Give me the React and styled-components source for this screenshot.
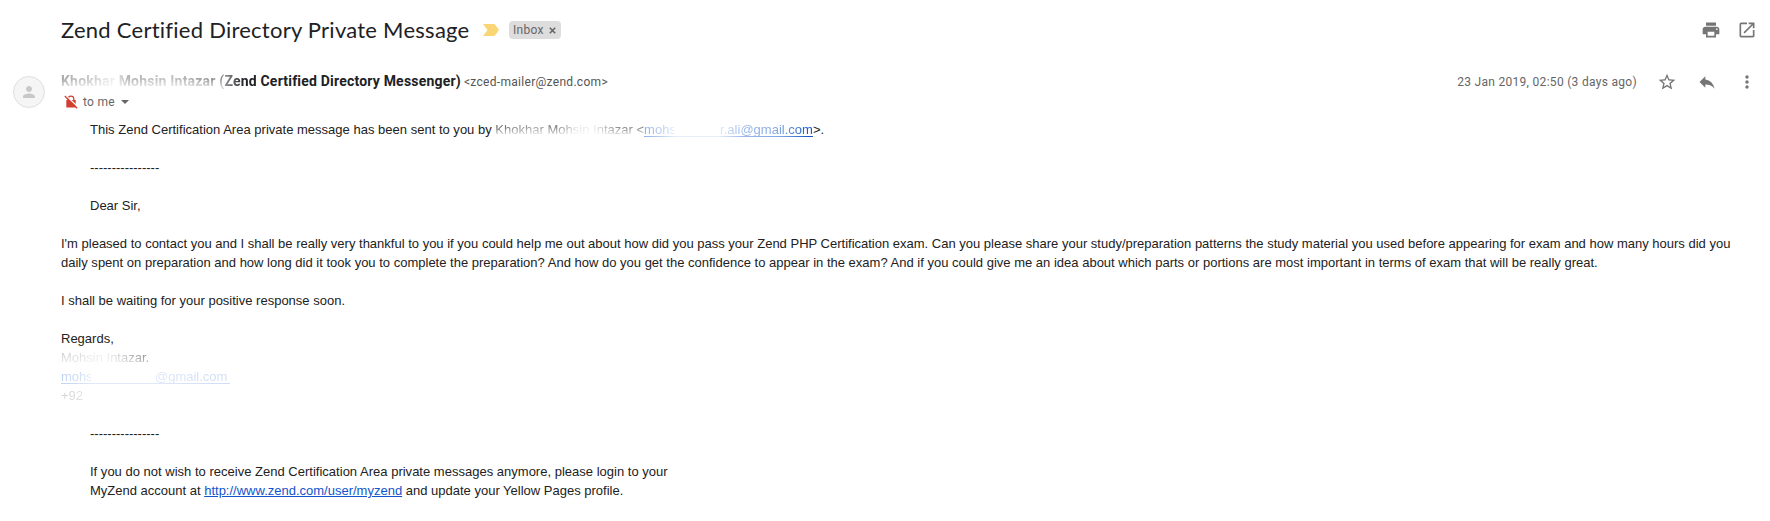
import React from "react";
import styled, { createGlobalStyle } from "styled-components";

const Global = createGlobalStyle`
  * { box-sizing: border-box; }
  body { margin: 0; background: #fff; color: #222; }
`;

const Page = styled.main`
  width: 1770px;
  height: 521px;
  overflow: hidden;
  background: #fff;
`;

const Bar = styled.header`
  display: flex;
  align-items: center;
  height: 60px;
  padding: 0 13px 0 61px;
`;

const Subject = styled.h1`
  margin: 0;
  font: 400 22px/28px Lato, sans-serif;
  letter-spacing: ${(p) => p.$track}px;
  color: #202124;
  white-space: nowrap;
  width: 422px;
`;

const Tag = styled.span`
  display: flex;
  align-items: center;
  justify-content: space-between;
  width: 52px;
  height: 18px;
  margin-left: 10px;
  padding: 0 5px 0 4px;
  border-radius: 4px;
  background: #ddd;
  color: #666;
  font: 400 12px/18px Roboto, sans-serif;
  letter-spacing: 0.3px;
`;

const Actions = styled.div`
  display: flex;
  align-items: center;
  margin-left: auto;
  gap: ${(p) => p.$gap}px;
`;

const Icon = styled.svg`
  display: block;
  flex: none;
  width: ${(p) => p.$size || 20}px;
  height: ${(p) => p.$size || 20}px;
  fill: ${(p) => p.$color || "#757575"};
`;

const Marker = styled.svg`
  display: block;
  width: 16px;
  height: 12px;
  fill: #f9d573;
`;

const Sender = styled.section`
  display: flex;
  height: 60px;
  padding: 0 13px;
`;

const Avatar = styled.div`
  display: flex;
  align-items: center;
  justify-content: center;
  width: 32px;
  height: 32px;
  margin: 16px 16px 0 0;
  border: 1px solid #e0e0e0;
  border-radius: 50%;
  background: #f5f5f5;
`;

const Who = styled.div`
  display: flex;
  flex-direction: column;
  padding-top: 11px;
`;

const NameRow = styled.div`
  display: flex;
  align-items: baseline;
  height: 21px;
  font: 700 14px/20px Roboto, sans-serif;
  letter-spacing: 0.2px;
  color: #202124;
  white-space: pre;
`;

const Address = styled.span`
  font: 400 12px/20px Roboto, sans-serif;
  letter-spacing: 0.3px;
  color: #555;
  margin-left: 3px;
`;

const Recipient = styled.div`
  display: flex;
  align-items: center;
  height: 20px;
  padding-left: 3px;
  font: 400 12px/20px Roboto, sans-serif;
  letter-spacing: 0.3px;
  color: #666;
`;

const RecipientName = styled.span`
  margin: 0 6px 0 5px;
`;

const Caret = styled.i`
  border: 4px solid transparent;
  border-top-color: #666;
  border-bottom: 0;
`;

const Meta = styled.div`
  display: flex;
  align-items: center;
  height: 20px;
  margin: 12px 0 0 auto;
`;

const DateText = styled.span`
  margin-right: 20px;
  font: 400 12px/20px Roboto, sans-serif;
  letter-spacing: 0.3px;
  color: #666;
`;

const Body = styled.article`
  padding-left: 61px;
  font: 400 13px/19px "Liberation Sans", Arial, sans-serif;
  color: #222;
`;

const Line = styled.div`
  display: flex;
  height: 19px;
  padding-left: ${(p) => (p.$indent ? 29 : 0)}px;
  letter-spacing: ${(p) => p.$track || 0}px;
  white-space: pre;
`;

const Link = styled.a`
  color: #15c;
  text-decoration: underline;
`;

const Faded = styled.span`
  display: inline-block;
  white-space: pre;
  opacity: ${(p) => p.$strength ?? 1};
  width: ${(p) => (p.$width ? p.$width + "px" : "auto")};
  mask-image: ${(p) => p.$mask}${(p) => (p.$low ? `, linear-gradient(#000 40%, ${p.$low} 75%)` : "")};
  mask-composite: intersect;
`;

const FadedLink = styled(Faded)`
  color: #15c;
  border-bottom: 1px solid #15c;
  height: 17px;
`;

const paths = {
  print: "M19 8H5c-1.66 0-3 1.34-3 3v6h4v4h12v-4h4v-6c0-1.66-1.34-3-3-3zm-3 11H8v-5h8v5zm3-7c-.55 0-1-.45-1-1s.45-1 1-1 1 .45 1 1-.45 1-1 1zm-1-9H6v4h12V3z",
  open: "M19 19H5V5h7V3H5c-1.11 0-2 .9-2 2v14c0 1.1.89 2 2 2h14c1.1 0 2-.9 2-2v-7h-2v7zM14 3v2h3.59l-9.83 9.83 1.41 1.41L19 6.41V10h2V3h-7z",
  star: "M22 9.24l-7.19-.62L12 2 9.19 8.63 2 9.24l5.46 4.73L5.82 21 12 17.27 18.18 21l-1.63-7.03L22 9.24zM12 15.4l-3.76 2.27 1-4.28-3.32-2.88 4.38-.38L12 6.1l1.71 4.04 4.38.38-3.32 2.88 1 4.28L12 15.4z",
  reply: "M10 9V5l-7 7 7 7v-4.1c5 0 8.5 1.6 11 5.1-1-5-4-10-11-11z",
  more: "M12 8c1.1 0 2-.9 2-2s-.9-2-2-2-2 .9-2 2 .9 2 2 2zm0 2c-1.100 0-2 .9-2 2s.9 2 2 2 2-.9 2-2-.9-2-2-2zm0 6c-1.100 0-2 .9-2 2s.9 2 2 2 2-.9 2-2-.9-2-2-2z",
  person: "M12 12c2.210 0 4-1.790 4-4s-1.790-4-4-4-4 1.790-4 4 1.790 4 4 4zm0 2c-2.670 0-8 1.340-8 4v2h16v-2c0-2.660-5.330-4-8-4z",
};

const Glyph = ({ name, size, color }) => (
  <Icon viewBox="0 0 24 24" $size={size} $color={color}>
    <path d={paths[name]} />
  </Icon>
);

const Unlocked = () => (
  <Icon viewBox="0 0 14 14" $size={14} $color="#d23f31">
    <path d="M4.200 5V4a2.800 2.800 0 0 1 5.600 0v1" fill="none" stroke="#d23f31" strokeWidth="1.2" />
    <path d="M2.300 5H11.700v7.500H2.300z" />
    <path d="M1.200 0L14 12" stroke="#fff" strokeWidth="1.300" />
    <path d="M.8 1L13.200 13.200" stroke="#d23f31" strokeWidth="1.300" />
  </Icon>
);

export default function App() {
  return (
    <>
      <Global />
      <Page>
        <Bar>
          <Subject $track={0.25}>Zend Certified Directory Private Message</Subject>
          <Marker viewBox="0 0 16 12">
            <path d="M0 0H11a1.500 1.500 0 0 1 1 .5L16 6l-4 5.500a1.500 1.500 0 0 1-1 .5H0L4.500 6z" />
          </Marker>
          <Tag>
            <span>Inbox</span>
            <svg width="7" height="7" viewBox="0 0 7 7">
              <path d="M.8.8l5.400 5.400M6.200.8L.8 6.200" stroke="#666" strokeWidth="1.600" />
            </svg>
          </Tag>
          <Actions $gap={16}>
            <Glyph name="print" />
            <Glyph name="open" />
          </Actions>
        </Bar>
        <Sender>
          <Avatar>
            <Glyph name="person" size={18} color="#c8c8c8" />
          </Avatar>
          <Who>
            <NameRow>
              <Faded $low="#0006" $mask="linear-gradient(90deg, #0006 0, #0003 35px, #0001 54px, #0005 66px, #0004 110px, #0007 150px, #0008 165px)">
                {"Khokhar Mohsin Intazar ("}
              </Faded>
              <Faded $mask="linear-gradient(90deg, #0007 0, #000 20px)">Zend</Faded>
              {" Certified Directory Messenger)"}
              <Address>&lt;zced-mailer@zend.com&gt;</Address>
            </NameRow>
            <Recipient>
              <Unlocked />
              <RecipientName>to me</RecipientName>
              <Caret />
            </Recipient>
          </Who>
          <Meta>
            <DateText>23 Jan 2019, 02:50 (3 days ago)</DateText>
            <Actions $gap={20}>
              <Glyph name="star" />
              <Glyph name="reply" />
              <Glyph name="more" />
            </Actions>
          </Meta>
        </Sender>
        <Body>
          <Line $indent $track={0.01}>
            {"This Zend Certification Area private message has been sent to you by "}
            <Faded $low="#0005" $mask="linear-gradient(90deg, #000a 0, #0006 40px, #0009 60px, #0002 82px, #0001 98px, #0007 118px, #0009 148px)">
              {"Khokhar Mohsin Intazar <"}
            </Faded>
            <FadedLink $width={30} $mask="linear-gradient(90deg, #0007, #0002)">mohs</FadedLink>
            <FadedLink $width={46} $strength={0.1} $mask="none" />
            <FadedLink $mask="linear-gradient(90deg, #0002, #0006 22px, #0008 60px, #000 90px)">
              r.ali@gmail.com
            </FadedLink>
            {">."}
          </Line>
          <Line />
          <Line $indent>----------------</Line>
          <Line />
          <Line $indent>Dear Sir,</Line>
          <Line />
          <Line>
            I'm pleased to contact you and I shall be really very thankful to you if you could help me out about how did you pass your Zend PHP Certification exam. Can you please share your study/preparation patterns the study material you used before appearing for exam and how many hours did you
          </Line>
          <Line $track={0.004}>
            daily spent on preparation and how long did it took you to complete the preparation? And how do you get the confidence to appear in the exam? And if you could give me an idea about which parts or portions are most important in terms of exam that will be really great.
          </Line>
          <Line />
          <Line>I shall be waiting for your positive response soon.</Line>
          <Line />
          <Line>Regards,</Line>
          <Line>
            <Faded $low="#0009" $mask="linear-gradient(90deg, #0003, #0001 45px, #0004 65px, #0008 88px)">
              Mohsin Intazar.
            </Faded>
          </Line>
          <Line>
            <FadedLink $width={30} $mask="linear-gradient(90deg, #0004, #0002)">mohs</FadedLink>
            <FadedLink $width={64} $strength={0.12} $mask="none" />
            <FadedLink $width={75} $mask="linear-gradient(90deg, #0002, #0003)">@gmail.com</FadedLink>
          </Line>
          <Line>
            <Faded $mask="linear-gradient(90deg, #0003, #0002)">+92</Faded>
          </Line>
          <Line />
          <Line $indent>----------------</Line>
          <Line />
          <Line $indent $track={0.01}>
            If you do not wish to receive Zend Certification Area private messages anymore, please login to your
          </Line>
          <Line $indent>
            {"MyZend account at "}
            <Link>http://www.zend.com/user/myzend</Link>
            {" and update your Yellow Pages profile."}
          </Line>
        </Body>
      </Page>
    </>
  );
}
